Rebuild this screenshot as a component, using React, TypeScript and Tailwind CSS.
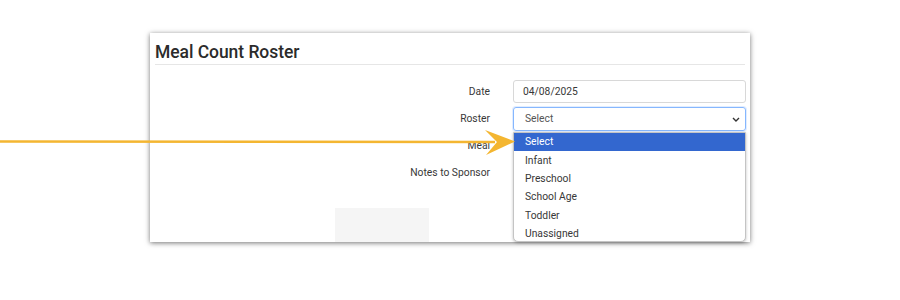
import React from "react";

const font = { fontFamily: "Roboto, 'Liberation Sans', sans-serif" };

export default function App() {
  const options = ["Select", "Infant", "Preschool", "School Age", "Toddler", "Unassigned"];
  return (
    <div className="relative w-[900px] h-[300px] bg-white overflow-hidden" style={font}>
      <div className="pt-[33px] pl-[150px]">
        <div className="relative w-[600px] h-[209px] bg-white shadow-[0_1px_5px_rgba(0,0,0,0.55)]">
          <div className="mx-[5px] h-[32px] border-b border-[#e6e6e6] flex items-end pb-[3px]">
            <h1 className="text-[17.5px] font-medium text-[#2b2b2b] leading-none tracking-[-0.05px]">Meal Count Roster</h1>
          </div>
          <div className="mt-[15px] flex flex-col text-[10.3px] text-[#383838]">
            <div className="flex items-center h-[23px]">
              <div className="w-[340px] text-right">Date</div>
              <div className="ml-[23px] w-[233px] h-[23px] border border-[#d8d8d8] rounded-[3px] flex items-center pl-[9px]">04/08/2025</div>
            </div>
            <div className="flex items-center h-[24px] mt-[4px]">
              <div className="w-[340px] text-right">Roster</div>
              <div className="ml-[23px] w-[233px] h-[24px] border border-[#86b7fe] rounded-[3px] flex items-center justify-between pl-[11px] pr-[5px] text-[#555] shadow-[0_0_0_1px_rgba(134,183,254,0.25)]">
                <span>Select</span>
                <svg width="8" height="5" viewBox="0 0 8 5"><path d="M1 1l3 3L7 1" fill="none" stroke="#333" strokeWidth="1.4" /></svg>
              </div>
            </div>
            <div className="flex items-center h-[22px] mt-[4px]">
              <div className="w-[340px] text-right">Meal</div>
            </div>
            <div className="flex items-center h-[22px] mt-[5px]">
              <div className="w-[340px] text-right">Notes to Sponsor</div>
            </div>
            <div className="mt-[24px] ml-[185px] w-[94px] h-[34px] bg-[#f5f5f5]" />
          </div>
          <div className="absolute left-[363px] top-[99px] w-[233px] h-[110px] bg-white border border-[#c4c4c4] rounded-b-[5px] shadow-[0_1px_3px_rgba(0,0,0,0.25)] text-[10.3px] text-[#383838] overflow-hidden">
            {options.map((o, i) => (
              <div key={o} className={`h-[18.3px] flex items-center pl-[11px] ${i === 0 ? "bg-[#3367cf] text-white" : ""}`}>{o}</div>
            ))}
          </div>
        </div>
      </div>
      <svg className="absolute left-0 top-[126px]" width="520" height="32" viewBox="0 0 520 32">
        <path d="M0 15.5 L495 16" stroke="#f4b631" strokeWidth="2.6" />
        <path d="M485 4 L515 15.5 L486 29 L497 16 Z" fill="#f4b631" />
      </svg>
    </div>
  );
}
